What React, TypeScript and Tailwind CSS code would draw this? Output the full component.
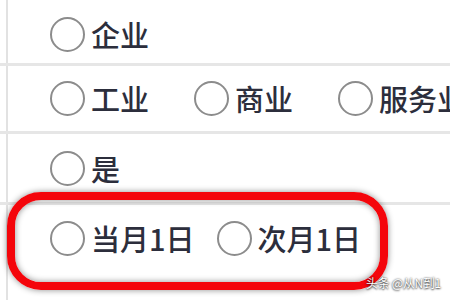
const Radio = ({ label }: { label: string }) => (
  <label className="flex items-center gap-[6px]">
    <span className="block h-[35px] w-[35px] shrink-0 rounded-full border-2 border-[#8c8c8c] bg-white" />
    <span className="whitespace-nowrap text-[29px] font-medium leading-none text-[#2c2e3c]">{label}</span>
  </label>
);

const rows = [
  { h: "h-[66px]", gap: "gap-[45px]", items: ["企业"] },
  { h: "h-[68px]", gap: "gap-[45px]", items: ["工业", "商业", "服务业"] },
  { h: "h-[71px]", gap: "gap-[45px]", items: ["是"] },
  { h: "h-[95px]", gap: "gap-[22px]", items: ["当月1日", "次月1日"] },
];

export default function App() {
  return (
    <div
      className="relative h-[300px] w-[450px] overflow-hidden bg-white"
      style={{ fontFamily: '"Noto Sans CJK SC", "Noto Sans", sans-serif' }}
    >
      {rows.map((row, i) => (
        <div
          key={i}
          className={`grid grid-cols-[8px_1fr] ${row.h} ${i < rows.length - 1 ? "border-b-[3px] border-[#e6e6e6]" : ""}`}
        >
          <div className="border-r-2 border-[#e2e2e2]" />
          <div className={`flex items-center overflow-hidden pl-[42px] ${i === 0 ? "pt-[6px]" : ""} ${i === 3 ? "pb-[50px] pt-[22px]" : ""} ${row.gap}`}>
            {row.items.map((it) => (
              <Radio key={it} label={it} />
            ))}
          </div>
        </div>
      ))}

      {/* red highlight annotation */}
      <div className="absolute left-[7px] top-[192px] h-[98px] w-[381px] rounded-[34px] border-[8px] border-[#f4050b] shadow-[0_0_6px_rgba(0,0,0,0.45),inset_0_0_6px_rgba(0,0,0,0.45)]" />

      {/* watermark */}
      <div className="absolute left-[366px] top-[277px] whitespace-nowrap text-[12px] leading-none tracking-[-0.3px] text-white [text-shadow:0_0_2px_rgba(0,0,0,0.8),0_1px_2px_rgba(0,0,0,0.6)]">
        头条 @从N到1
      </div>
    </div>
  );
}
